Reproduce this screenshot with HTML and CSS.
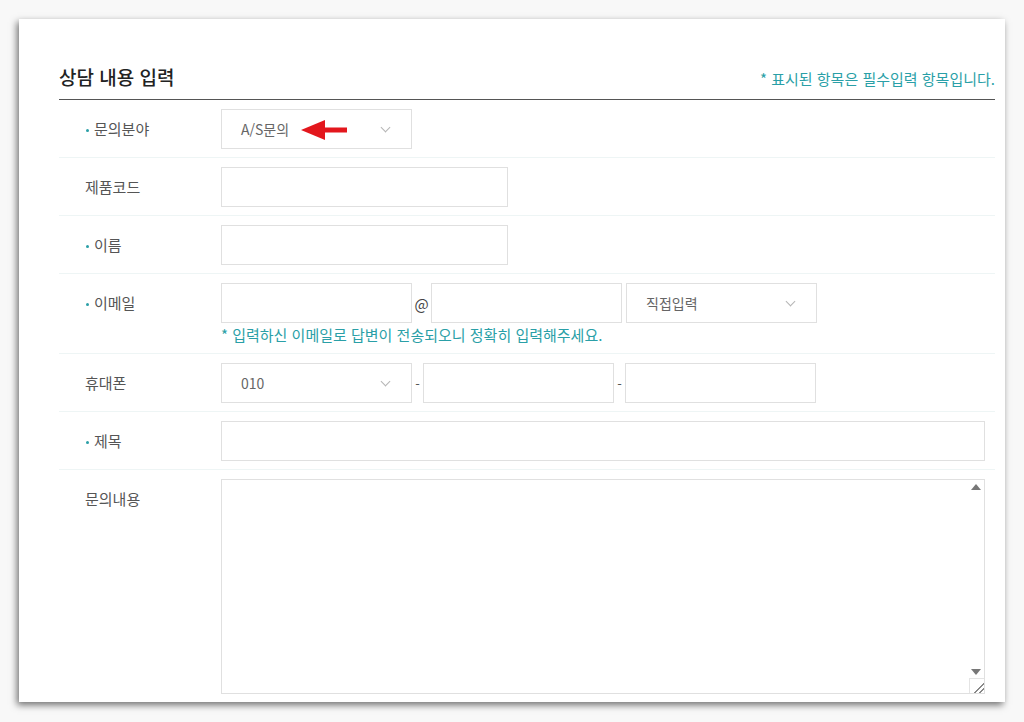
FILE: index.html
```html
<!DOCTYPE html>
<html lang="ko">
<head>
  <meta charset="UTF-8">
  <title>상담 내용 입력</title>
  <link rel="stylesheet" href="styles.css">
</head>
<body>
  <div class="card">
    <div class="head">
      <h2>상담 내용 입력</h2>
      <span class="note">* 표시된 항목은 필수입력 항목입니다.</span>
    </div>

    <div class="row">
      <div class="label req">문의분야</div>
      <div class="field">
        <div class="select">
          <span>A/S문의</span>
          <svg class="arrow" width="46" height="20" viewBox="0 0 46 20">
            <polygon points="0,10 24,0 24,20" fill="#e3171d"/>
            <rect x="20" y="7.5" width="26" height="5" fill="#e3171d"/>
          </svg>
        </div>
      </div>
    </div>

    <div class="row">
      <div class="label">제품코드</div>
      <div class="field"><div class="input w287"></div></div>
    </div>

    <div class="row">
      <div class="label req">이름</div>
      <div class="field"><div class="input w287"></div></div>
    </div>

    <div class="row">
      <div class="label req">이메일</div>
      <div class="field">
        <div class="line">
          <div class="input w191"></div>
          <span class="at">@</span>
          <div class="input w191"></div>
          <div class="select gap4"><span>직접입력</span></div>
        </div>
        <p class="help">* 입력하신 이메일로 답변이 전송되오니 정확히 입력해주세요.</p>
      </div>
    </div>

    <div class="row">
      <div class="label">휴대폰</div>
      <div class="field">
        <div class="line">
          <div class="select"><span>010</span></div>
          <span class="dash">-</span>
          <div class="input w191"></div>
          <span class="dash">-</span>
          <div class="input w191"></div>
        </div>
      </div>
    </div>

    <div class="row">
      <div class="label req">제목</div>
      <div class="field"><div class="input wide"></div></div>
    </div>

    <div class="row last">
      <div class="label">문의내용</div>
      <div class="field">
        <div class="textarea">
          <span class="up"></span>
          <span class="down"></span>
          <span class="grip"></span>
        </div>
      </div>
    </div>
  </div>
</body>
</html>
```

FILE: styles.css
```css
* {
  box-sizing: border-box;
}

body {
  margin: 0;
  height: 722px;
  background: #f8f8f8;
  font-family: "Noto Sans CJK KR", "Noto Sans", sans-serif;
  padding: 19px 0 0 19px;
}

.card {
  width: 986px;
  height: 683px;
  background: #fff;
  padding: 46px 10px 0 40px;
  box-shadow: -2px 3px 7px rgba(0, 0, 0, 0.55);
}

.head {
  display: flex;
  justify-content: space-between;
  align-items: baseline;
  padding-bottom: 10px;
  border-bottom: 1px solid #555;
}

.head h2 {
  margin: 0;
  font-size: 19px;
  line-height: 24px;
  font-weight: 500;
  color: #222;
}

.note {
  font-size: 15px;
  color: #2a9fa7;
}

.row {
  display: flex;
  padding: 9px 0 8px;
  border-bottom: 1px solid #eef5f5;
}

.row.last {
  border-bottom: none;
}

.label {
  width: 162px;
  flex-shrink: 0;
  padding-left: 26px;
  font-size: 15px;
  line-height: 40px;
  color: #555;
  display: flex;
  align-items: center;
  height: 40px;
}

.label.req::before {
  content: "";
  width: 3px;
  height: 3px;
  background: #2a9fa7;
  border-radius: 50%;
  margin: 3px 5px 0 1px;
}

.field {
  flex: 1;
}

.line {
  display: flex;
  align-items: center;
}

.input,
.select,
.textarea {
  height: 40px;
  border: 1px solid #e0e0e0;
  background: #fff;
}

.w191 { width: 191px; }
.w287 { width: 287px; }
.wide { width: 764px; }

.select {
  width: 191px;
  display: flex;
  align-items: center;
  padding-left: 19px;
  font-size: 14px;
  color: #666;
  position: relative;
}

.select::after {
  content: "";
  position: absolute;
  right: 22px;
  top: 14px;
  width: 6px;
  height: 6px;
  border-right: 1px solid #b5b5b5;
  border-bottom: 1px solid #b5b5b5;
  transform: rotate(45deg);
}

.select.gap4 {
  margin-left: 4px;
}

.arrow {
  margin-left: 12px;
  margin-top: 2px;
}

.at {
  width: 19px;
  text-align: center;
  font-size: 15px;
  color: #444;
}

.dash {
  width: 11px;
  text-align: center;
  font-size: 13px;
  color: #555;
}

.help {
  margin: 2px 0 0;
  font-size: 15px;
  line-height: 20px;
  color: #2a9fa7;
}

.textarea {
  width: 764px;
  height: 215px;
  position: relative;
}

.textarea .up,
.textarea .down {
  position: absolute;
  right: 3px;
  width: 0;
  height: 0;
  border-left: 5px solid transparent;
  border-right: 5px solid transparent;
}

.textarea .up {
  top: 4px;
  border-bottom: 6px solid #777;
}

.textarea .down {
  bottom: 18px;
  border-top: 6px solid #777;
}

.textarea .grip {
  position: absolute;
  right: 0;
  bottom: 0;
  width: 15px;
  height: 15px;
  border-top: 1px solid #e4e4e4;
  border-left: 1px solid #e4e4e4;
  background: linear-gradient(135deg, transparent 62%, #888 62%, #888 68%, transparent 68%, transparent 80%, #888 80%, #888 86%, transparent 86%);
}
```
